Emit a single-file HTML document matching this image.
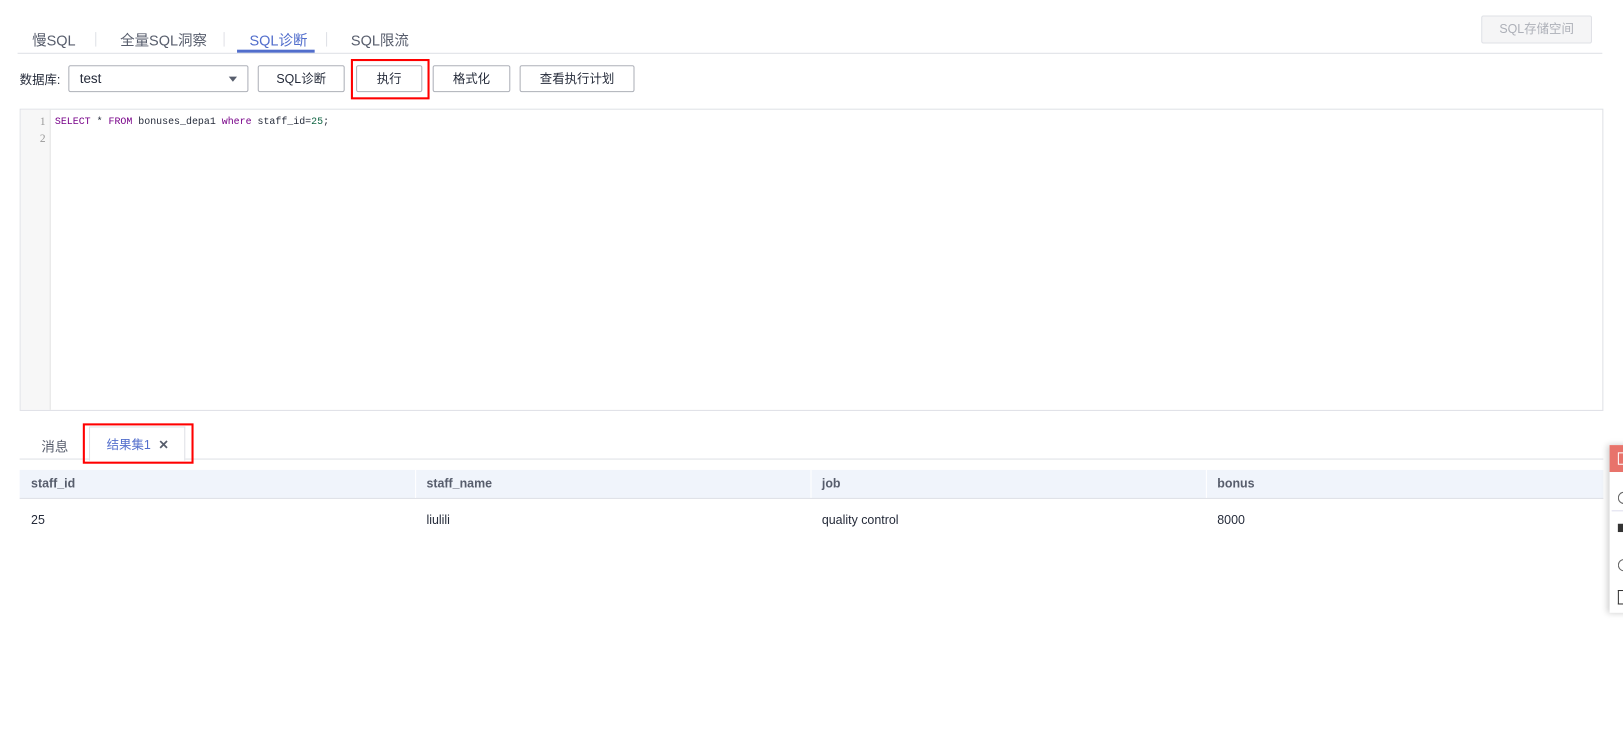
<!DOCTYPE html>
<html><head><meta charset="utf-8"><style>
*{box-sizing:border-box;margin:0;padding:0}
body{width:1623px;height:742px;background:#fff;font-family:"Liberation Sans","Noto Sans CJK SC",sans-serif;font-size:12px;color:#252b3a;position:relative;overflow:hidden}
#w{position:absolute;left:0;top:0;width:1568px;height:717px;transform:scale(1.0351);transform-origin:0 0}
.a{position:absolute}
.tab{position:absolute;top:29px;font-size:14px;color:#575d6c}
.sep{position:absolute;top:31px;width:1px;height:14px;background:#dfe1e6}
.btn{position:absolute;top:63px;height:26px;border:1px solid #adb0b8;border-radius:2px;text-align:center;line-height:24px;font-size:12px;color:#252b3a;background:#fff}
.red{position:absolute;border:2px solid #f00}
.th{position:absolute;top:454px;height:27px;line-height:27px;font-weight:bold;color:#575d6c;font-size:12px}
.td{position:absolute;top:495px;font-size:12px;color:#252b3a}
</style></head><body><div id="w">
<div class="tab" style="left:31px">慢SQL</div>
<div class="sep" style="left:92px"></div>
<div class="tab" style="left:116px">全量SQL洞察</div>
<div class="sep" style="left:216px"></div>
<div class="tab" style="left:241px;color:#526ecc">SQL诊断</div>
<div class="a" style="left:229px;top:48px;width:75px;height:3px;background:#526ecc"></div>
<div class="sep" style="left:315px"></div>
<div class="tab" style="left:339px">SQL限流</div>
<div class="a" style="left:17px;top:51px;width:1531px;height:1px;background:#dfe1e6"></div>
<div class="a" style="left:1431px;top:15px;width:107px;height:27px;border:1px solid #dfe1e6;background:#f5f5f6;color:#adb0b8;text-align:center;line-height:25px;border-radius:2px">SQL存储空间</div>

<div class="a" style="left:19px;top:68px">数据库:</div>
<div class="a" style="left:66px;top:63px;width:174px;height:26px;border:1px solid #adb0b8;border-radius:2px;padding-left:10px;line-height:24px;font-size:13px">test</div>
<div class="a" style="left:221px;top:74px;width:0;height:0;border-left:4px solid transparent;border-right:4px solid transparent;border-top:5px solid #575d6c"></div>
<div class="btn" style="left:249px;width:84px">SQL诊断</div>
<div class="btn" style="left:344px;width:64px">执行</div>
<div class="red" style="left:339px;top:57px;width:76px;height:39px"></div>
<div class="btn" style="left:418px;width:75px">格式化</div>
<div class="btn" style="left:502px;width:111px">查看执行计划</div>

<div class="a" style="left:19px;top:105px;width:1530px;height:292px;border:1px solid #dfe1e6"></div>
<div class="a" style="left:20px;top:106px;width:29px;height:290px;background:#f7f7f7;border-right:1px solid #e4e4e4"></div>
<div class="a" style="left:20px;top:110px;width:24px;text-align:right;font-family:'Liberation Serif',serif;font-size:11px;color:#999;line-height:16px">1<br>2</div>
<div class="a" style="left:53px;top:110px;font-family:'Liberation Mono',monospace;font-size:9.6px;line-height:16px;white-space:pre"><span style="color:#708">SELECT</span> * <span style="color:#708">FROM</span> bonuses_depa1 <span style="color:#708">where</span> staff_id=<span style="color:#164">25</span>;</div>

<div class="a" style="left:40px;top:421px;font-size:13px;color:#575d6c">消息</div>
<div class="a" style="left:86px;top:412px;width:93px;height:33px;border:1px solid #dfe1e6;border-bottom:none;background:#fff;z-index:2"></div>
<div class="a" style="left:103px;top:421px;font-size:12px;color:#526ecc;z-index:3">结果集1 <span style="color:#575d6c;font-weight:bold;margin-left:4px">✕</span></div>
<div class="a" style="left:19px;top:443px;width:1530px;height:1px;background:#dfe1e6"></div>
<div class="red" style="left:80px;top:409px;width:107px;height:39px;z-index:4"></div>

<div class="a" style="left:19px;top:454px;width:1530px;height:28px;background:#f0f4fb;border-bottom:1px solid #dfe1e6"></div>
<div class="a" style="left:401px;top:454px;width:1px;height:27px;background:#fff"></div>
<div class="a" style="left:783px;top:454px;width:1px;height:27px;background:#fff"></div>
<div class="a" style="left:1165px;top:454px;width:1px;height:27px;background:#fff"></div>
<div class="th" style="left:30px">staff_id</div>
<div class="th" style="left:412px">staff_name</div>
<div class="th" style="left:794px">job</div>
<div class="th" style="left:1176px">bonus</div>
<div class="td" style="left:30px">25</div>
<div class="td" style="left:412px">liulili</div>
<div class="td" style="left:794px">quality control</div>
<div class="td" style="left:1176px">8000</div>

<div class="a" style="left:1555px;top:430px;width:70px;height:162px;background:#fff;box-shadow:-2px 0 6px rgba(0,0,0,.2)"></div>
<div class="a" style="left:1555px;top:430px;width:70px;height:26px;background:#e8736b"></div>
<div class="a" style="left:1563px;top:437px;width:8px;height:12px;border:1px solid #fff"></div>
<div class="a" style="left:1557px;top:493px;width:68px;height:1px;background:#dde"></div>
<div class="a" style="left:1563px;top:475px;width:8px;height:12px;border:1px solid #666;border-radius:6px 0 0 6px;border-right:none"></div>
<div class="a" style="left:1563px;top:506px;width:5px;height:8px;background:#333"></div>
<div class="a" style="left:1563px;top:540px;width:8px;height:12px;border:1px solid #666;border-radius:6px 0 0 6px;border-right:none"></div>
<div class="a" style="left:1563px;top:570px;width:6px;height:14px;border:1px solid #333;border-right:none"></div>
</div></body></html>
